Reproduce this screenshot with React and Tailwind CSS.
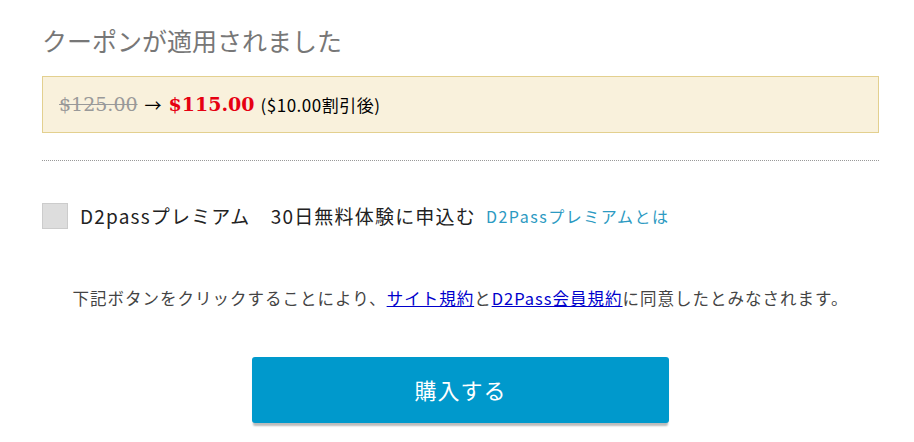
export default function App() {
  return (
    <main className="w-[914px] h-[442px] bg-white overflow-hidden pl-[42px] pr-[35px] pt-[24px] font-['Noto_Sans_CJK_JP','Noto_Sans',sans-serif]">
      {/* クーポン適用 */}
      <h1 className="text-[25px] leading-[32px] text-[#777] font-normal">
        クーポンが適用されました
      </h1>

      <div className="mt-[20px] h-[57px] flex items-center px-[16px] bg-[#f9f1dc] border border-[#e3d08f]">
        <span className="text-[19px] text-[#999] line-through font-['DejaVu_Serif',serif]">$125.00</span>
        <span className="text-[17px] text-black mx-[7px]">→</span>
        <span className="text-[19px] font-bold text-[#e60012] font-['DejaVu_Serif',serif]">$115.00</span>
        <span className="text-[17px] text-black ml-[6px] tracking-[0.5px]">($10.00割引後)</span>
      </div>

      <div className="mt-[27px] border-t border-dotted border-[#999]" />

      {/* プレミアム */}
      <label className="mt-[41px] flex items-center">
        <span className="w-[26px] h-[26px] bg-[#ddd] border border-[#ccc] shrink-0" />
        <span className="ml-[12px] text-[19px] tracking-[1.2px] text-[#222]">D2passプレミアム　30日無料体験に申込む</span>
        <a className="ml-[10px] text-[16px] tracking-[1.5px] text-[#2c9ac2]">D2Passプレミアムとは</a>
      </label>

      <p className="mt-[54px] text-center text-[16.5px] tracking-[1px] text-[#444] leading-[26px]">
        下記ボタンをクリックすることにより、
        <a className="text-[#0000cc] underline">サイト規約</a>
        と
        <a className="text-[#0000cc] underline">D2Pass会員規約</a>
        に同意したとみなされます。
      </p>

      <div className="mt-[46px] flex justify-center">
        <button className="w-[417px] h-[66px] rounded-[3px] bg-[#0099cc] text-white text-[22px] tracking-[1px] shadow-[0_4px_2px_-1px_#bbb]">
          購入する
        </button>
      </div>
    </main>
  );
}
